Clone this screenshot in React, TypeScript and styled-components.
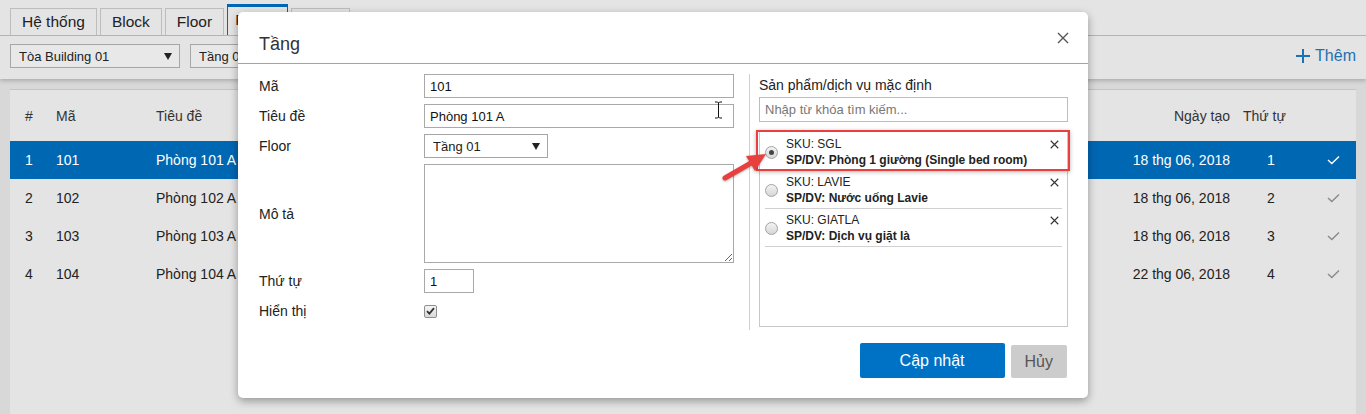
import React from "react";
import styled, { createGlobalStyle } from "styled-components";

const GlobalStyle = createGlobalStyle`
  html, body { margin: 0; padding: 0; }
  body {
    font-family: "Liberation Sans", Arial, sans-serif;
    color: #222;
  }
  * { box-sizing: border-box; }
`;

const Page = styled.div`
  position: relative;
  width: 1366px;
  height: 414px;
  overflow: hidden;
  background: #d8d8d8;
`;

const TopBar = styled.div`
  position: relative;
  z-index: 1;
  background: #e4e4e4;
  box-shadow: 0 2px 4px rgba(0, 0, 0, 0.2);
`;

const TabRow = styled.div`
  display: flex;
  align-items: flex-end;
  gap: 3px;
  height: 36px;
  padding: 0 10px;
  border-bottom: 1px solid #b4b4b4;
`;

const Tab = styled.div<{ $active?: boolean }>`
  height: ${(p) => (p.$active ? 31 : 27)}px;
  padding: 0 ${(p) => (p.$active ? 7 : 11)}px;
  border: 1px solid ${(p) => (p.$active ? "#0067b4" : "#bdbdbd")};
  border-top-width: ${(p) => (p.$active ? 3 : 1)}px;
  border-bottom: none;
  font-size: 15.5px;
  line-height: 25px;
  color: #222;
  white-space: nowrap;
`;

const Toolbar = styled.div`
  display: flex;
  align-items: center;
  gap: 10px;
  padding: 8px 10px 11px;
`;

const FakeSelect = styled.div<{ $w: number; $white?: boolean }>`
  width: ${(p) => p.$w}px;
  height: 24px;
  display: flex;
  align-items: center;
  justify-content: space-between;
  padding: 0 7px 0 8px;
  border: 1px solid #a6a6a6;
  background: ${(p) => (p.$white ? "#fff" : "#e8e8e8")};
  font-size: 13px;
  color: #222;
`;

const AddButton = styled.div`
  margin-left: auto;
  display: flex;
  align-items: center;
  gap: 5px;
  font-size: 16px;
  color: #1f6fb3;
`;

const Main = styled.div`
  padding: 10px 10px 0;
`;

const Card = styled.div`
  height: 330px;
  background: #e4e4e4;
  border-top: 1px solid #c4c4c4;
`;

const Row = styled.div<{ $head?: boolean; $selected?: boolean }>`
  display: grid;
  grid-template-columns: 46px 100px 1fr 143px 67px 46px;
  align-items: center;
  height: ${(p) => (p.$head ? 51 : 38)}px;
  font-size: 14px;
  background: ${(p) => (p.$selected ? "#0067b3" : "transparent")};
  color: ${(p) => (p.$selected ? "#fff" : p.$head ? "#333" : "#222")};
`;

const Cell = styled.div<{ $align?: "left" | "right" | "center"; $pl?: number; $pr?: number }>`
  white-space: nowrap;
  overflow: hidden;
  text-align: ${(p) => p.$align || "left"};
  padding-left: ${(p) => p.$pl || 0}px;
  padding-right: ${(p) => p.$pr || 0}px;
`;

const IconCell = styled.div`
  display: flex;
  justify-content: center;
`;

const Modal = styled.div`
  position: absolute;
  left: 238px;
  top: 12px;
  z-index: 2;
  width: 850px;
  height: 386px;
  background: #fff;
  border-radius: 5px;
  box-shadow: 0 3px 9px rgba(0, 0, 0, 0.35);
`;

const ModalHeader = styled.div`
  height: 52px;
  display: flex;
  align-items: flex-start;
  justify-content: space-between;
  padding: 22px 19px 0 21px;
  border-bottom: 1px solid #a3a3a3;
`;

const ModalTitle = styled.div`
  font-size: 18px;
  line-height: 20px;
  color: #333;
`;

const CloseBtn = styled.div`
  margin-top: -2px;
  width: 12px;
  height: 12px;
  display: flex;
`;

const ModalBody = styled.div`
  display: flex;
  padding: 10px 20px 0 21px;
`;

const LeftCol = styled.div`
  width: 491px;
  min-height: 256px;
  padding-right: 15px;
  border-right: 1px solid #cfcfcf;
`;

const FormRow = styled.div<{ $h?: number }>`
  display: flex;
  align-items: center;
  min-height: ${(p) => p.$h || 24}px;
  margin-bottom: 6px;
`;

const Label = styled.div`
  width: 165px;
  font-size: 14px;
  color: #222;
`;

const TextInput = styled.input<{ $w?: number }>`
  width: ${(p) => p.$w || 310}px;
  height: 24px;
  padding: 0 5px;
  border: 1px solid #a9a9a9;
  font-family: "Liberation Sans", Arial, sans-serif;
  font-size: 13px;
  color: #111;
  outline: none;
  &::placeholder { color: #777; }
`;

const TextArea = styled.textarea`
  width: 310px;
  height: 99px;
  border: 1px solid #a9a9a9;
  font-family: "Liberation Sans", Arial, sans-serif;
  font-size: 13px;
  outline: none;
`;

const CheckBox = styled.span`
  width: 13px;
  height: 13px;
  display: flex;
  align-items: center;
  justify-content: center;
  border: 1px solid #8f8f8f;
  border-radius: 2px;
  background: linear-gradient(#f6f6f6, #d9d9d9);
`;

const RightCol = styled.div`
  width: 309px;
  margin-left: 9px;
  display: flex;
  flex-direction: column;
`;

const RightLabel = styled.div`
  height: 23px;
  line-height: 23px;
  font-size: 14px;
  color: #222;
`;

const SearchInput = styled(TextInput)`
  width: 309px;
  height: 25px;
  border-color: #bdbdbd;
`;

const List = styled.div`
  margin-top: 8px;
  height: 197px;
  padding: 2px 5px 0;
  border: 1px solid #c8c8c8;
`;

const Item = styled.div<{ $highlight?: boolean }>`
  position: relative;
  display: flex;
  align-items: center;
  gap: 8px;
  padding: 3px 0 2px;
  border-bottom: 1px solid #d0d0d0;
  ${(p) =>
    p.$highlight &&
    `&::after {
      content: "";
      position: absolute;
      inset: -3px -8px -1px -9px;
      border: 2px solid #e8403d;
      box-shadow: 0 1px 4px rgba(0,0,0,.3);
    }`}
`;

const Radio = styled.span<{ $on?: boolean }>`
  flex: none;
  width: 13px;
  height: 13px;
  border-radius: 50%;
  border: 1px solid #a3a3a3;
  background: linear-gradient(#f3f3f3, #d6d6d6);
  display: flex;
  align-items: center;
  justify-content: center;
  &::after {
    content: "";
    width: 5px;
    height: 5px;
    border-radius: 50%;
    background: ${(p) => (p.$on ? "#444" : "transparent")};
  }
`;

const ItemText = styled.div`
  flex: 1;
  font-size: 12px;
  line-height: 16px;
  color: #222;
`;

const ItemSub = styled.div`
  font-weight: bold;
`;

const RemoveX = styled.div`
  align-self: flex-start;
  margin: 4px 3px 0 0;
  display: flex;
`;

const Footer = styled.div`
  display: flex;
  justify-content: flex-end;
  align-items: flex-end;
  gap: 6px;
  padding: 13px 21px 0 0;
`;

const Button = styled.div<{ $primary?: boolean }>`
  height: ${(p) => (p.$primary ? 35 : 33)}px;
  padding: 0 ${(p) => (p.$primary ? 40 : 14)}px;
  display: flex;
  align-items: center;
  justify-content: center;
  border-radius: 2px;
  font-size: 16px;
  background: ${(p) => (p.$primary ? "#0072c6" : "#cccccc")};
  color: ${(p) => (p.$primary ? "#fff" : "#555")};
`;

const Arrow = styled.svg`
  position: absolute;
  left: 480px;
  top: 136px;
  filter: drop-shadow(0 1px 1px rgba(0, 0, 0, 0.3));
`;

const IBeam = styled.svg`
  position: absolute;
  left: 476px;
  top: 89px;
`;

const Caret = () => (
  <svg width="8" height="7" viewBox="0 0 8 7">
    <path d="M0 0 H8 L4 7 Z" fill="#222" />
  </svg>
);

const Cross = ({ size, color, w }: { size: number; color: string; w: number }) => (
  <svg width={size} height={size} viewBox="0 0 12 12">
    <path d="M1 1 L11 11 M11 1 L1 11" stroke={color} strokeWidth={w} fill="none" />
  </svg>
);

const Check = ({ color }: { color: string }) => (
  <svg width="13" height="10" viewBox="0 0 13 10">
    <path d="M1 5 L4.8 8.6 L12 1.4" stroke={color} strokeWidth="1.4" fill="none" />
  </svg>
);

const rows = [
  { no: 1, code: "101", title: "Phòng 101 A", date: "18 thg 06, 2018", order: 1 },
  { no: 2, code: "102", title: "Phòng 102 A", date: "18 thg 06, 2018", order: 2 },
  { no: 3, code: "103", title: "Phòng 103 A", date: "18 thg 06, 2018", order: 3 },
  { no: 4, code: "104", title: "Phòng 104 A", date: "22 thg 06, 2018", order: 4 },
];

const products = [
  { sku: "SGL", name: "Phòng 1 giường (Single bed room)", selected: true },
  { sku: "LAVIE", name: "Nước uống Lavie" },
  { sku: "GIATLA", name: "Dịch vụ giặt là" },
];

export default function App() {
  return (
    <Page>
      <GlobalStyle />
      <TopBar>
        <TabRow>
          <Tab>Hệ thống</Tab>
          <Tab>Block</Tab>
          <Tab>Floor</Tab>
          <Tab $active>Phòng</Tab>
          <Tab>Khác</Tab>
        </TabRow>
        <Toolbar>
          <FakeSelect $w={170}>
            Tòa Building 01 <Caret />
          </FakeSelect>
          <FakeSelect $w={170}>
            Tầng 01 <Caret />
          </FakeSelect>
          <AddButton>
            <svg width="14" height="14" viewBox="0 0 14 14">
              <path d="M7 0 V14 M0 7 H14" stroke="#1f6fb3" strokeWidth="2" />
            </svg>
            Thêm
          </AddButton>
        </Toolbar>
      </TopBar>

      <Main>
        <Card>
          <Row $head>
            <Cell $pl={15}>#</Cell>
            <Cell>Mã</Cell>
            <Cell>Tiêu đề</Cell>
            <Cell $align="right" $pr={13}>Ngày tạo</Cell>
            <Cell>Thứ tự</Cell>
            <Cell />
          </Row>
          {rows.map((r) => (
            <Row key={r.no} $selected={r.no === 1}>
              <Cell $pl={15}>{r.no}</Cell>
              <Cell>{r.code}</Cell>
              <Cell>{r.title}</Cell>
              <Cell $align="right" $pr={13}>{r.date}</Cell>
              <Cell $pl={24}>{r.order}</Cell>
              <IconCell>
                <Check color={r.no === 1 ? "#fff" : "#8a8a8a"} />
              </IconCell>
            </Row>
          ))}
        </Card>
      </Main>

      <Modal>
        <ModalHeader>
          <ModalTitle>Tầng</ModalTitle>
          <CloseBtn>
            <Cross size={12} color="#555" w={1.4} />
          </CloseBtn>
        </ModalHeader>
        <ModalBody>
          <LeftCol>
            <FormRow>
              <Label>Mã</Label>
              <TextInput readOnly value="101" />
            </FormRow>
            <FormRow>
              <Label>Tiêu đề</Label>
              <TextInput readOnly value="Phòng 101 A" />
            </FormRow>
            <FormRow>
              <Label>Floor</Label>
              <FakeSelect $w={124} $white>
                Tầng 01 <Caret />
              </FakeSelect>
            </FormRow>
            <FormRow $h={99}>
              <Label>Mô tả</Label>
              <TextArea readOnly value="" />
            </FormRow>
            <FormRow>
              <Label>Thứ tự</Label>
              <TextInput readOnly value="1" $w={50} />
            </FormRow>
            <FormRow>
              <Label>Hiển thị</Label>
              <CheckBox>
                <svg width="9" height="8" viewBox="0 0 9 8">
                  <path d="M1 4.2 L3.4 6.6 L8 1.2" stroke="#333" strokeWidth="1.8" fill="none" />
                </svg>
              </CheckBox>
            </FormRow>
          </LeftCol>
          <RightCol>
            <RightLabel>Sản phẩm/dịch vụ mặc định</RightLabel>
            <SearchInput readOnly placeholder="Nhập từ khóa tìm kiếm..." />
            <List>
              {products.map((p) => (
                <Item key={p.sku} $highlight={p.selected}>
                  <Radio $on={p.selected} />
                  <ItemText>
                    <div>SKU: {p.sku}</div>
                    <ItemSub>SP/DV: {p.name}</ItemSub>
                  </ItemText>
                  <RemoveX>
                    <Cross size={9} color="#333" w={1.5} />
                  </RemoveX>
                </Item>
              ))}
            </List>
          </RightCol>
        </ModalBody>
        <Footer>
          <Button $primary>Cập nhật</Button>
          <Button>Hủy</Button>
        </Footer>

        <Arrow width="55" height="40" viewBox="0 0 55 40">
          <path d="M7 30 L33 15" stroke="#e8403d" strokeWidth="5" strokeLinecap="round" />
          <path d="M48 6 L37 23 L28 8 Z" fill="#e8403d" />
        </Arrow>
        <IBeam width="9" height="18" viewBox="0 0 9 18">
          <path d="M1 1 H3.5 L4.5 2 L5.5 1 H8 M4.5 2 V16 M1 17 H3.5 L4.5 16 L5.5 17 H8" stroke="#111" strokeWidth="1" fill="none" />
        </IBeam>
      </Modal>
    </Page>
  );
}
